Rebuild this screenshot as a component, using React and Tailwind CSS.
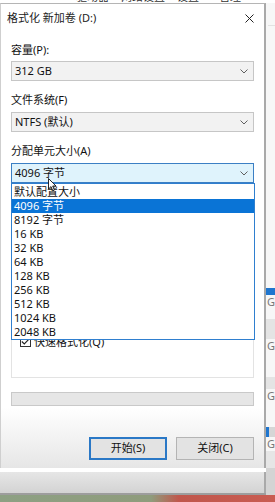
import React from 'react';

const sizes = ['默认配置大小', '4096 字节', '8192 字节', '16 KB', '32 KB', '64 KB', '128 KB', '256 KB', '512 KB', '1024 KB', '2048 KB'];

function Chevron() {
  return (
    <svg width="8" height="5" viewBox="0 0 8 5" className="shrink-0">
      <path d="M0.5 0.5 L4 4 L7.5 0.5" fill="none" stroke="#606060" strokeWidth="1" />
    </svg>
  );
}

function Select({ value, focused, children }) {
  return (
    <div
      className={
        'relative h-[20px] flex items-center justify-between pl-[3px] pr-[5px] border ' +
        (focused ? 'bg-[#dff3fc] border-[#3b7fc4]' : 'bg-[#f2f2f2] border-[#c6c6c6]')
      }
    >
      <span>{value}</span>
      <Chevron />
      {children}
    </div>
  );
}

function GlStrip() {
  return (
    <div className="w-[9px] flex flex-col bg-[#f7f7f7] text-[#777] overflow-hidden">
      <div className="h-[22px]" />
      <div className="h-[1px] bg-[#e2e2e2] ml-[2px]" />
      <div className="h-[262px]" />
      <div className="h-[7px] bg-[#1f76cf]" />
      <div className="h-[14px] leading-[14px] pl-[1px] text-[11px]">GI</div>
      <div className="h-[10px]" />
      <div className="h-[20px] bg-[#e4e4e4]" />
      <div className="h-[14px] leading-[14px] pl-[1px] text-[11px]">GI</div>
      <div className="h-[24px]" />
      <div className="h-[12px] bg-[#e4e4e4]" />
      <div className="h-[14px] leading-[14px] pl-[1px] text-[11px]">GI</div>
      <div className="h-[24px]" />
      <div className="h-[10px] flex">
        <div className="w-[3px] bg-[#1f76cf]" />
        <div className="flex-1 bg-[#d6d6d6]" />
      </div>
      <div className="h-[14px] leading-[14px] pl-[1px] text-[11px]">GI</div>
      <div className="flex-1 bg-[#e6e6e6]" />
    </div>
  );
}

export default function App() {
  return (
    <div
      className="w-[275px] h-[502px] overflow-hidden flex flex-col bg-white text-[11px] text-[#111]"
      style={{ fontFamily: '"Segoe UI", "Noto Sans", "Noto Sans CJK SC", sans-serif' }}
    >
      {/* window behind, only its bottom edge shows */}
      <div className="h-[3px] overflow-hidden bg-white">
        <div className="-mt-[9px] pl-[76px] leading-[12px] text-[#333] whitespace-nowrap flex gap-[12px]">
          <span>驱动器</span>
          <span>网络设置</span>
          <span>设置</span>
          <span className="pl-[8px]">管理</span>
        </div>
      </div>

      <div className="flex h-[465px]">
        <div className="relative w-[266px] flex flex-col border-t border-l border-r-2 border-t-[#b5b5b5] border-l-[#cfcfcf] border-r-[#a9a9a9] bg-[linear-gradient(to_bottom,#ffffff_87%,#e6e6e6)]">
          {/* title bar */}
          <div className="h-[29px] flex items-center justify-between pl-[6px] pr-[10px]">
            <span className="text-[11px] text-[#222]">格式化 新加卷 (D:)</span>
            <svg width="9" height="9" viewBox="0 0 9 9">
              <path d="M0.5 0.5 L8.5 8.5 M8.5 0.5 L0.5 8.5" stroke="#222" strokeWidth="1" />
            </svg>
          </div>

          <div className="px-[10px] flex flex-col">
            <div className="mt-[9px] leading-[16px]">容量(P):</div>
            <div className="mt-[3px]">
              <Select value="312 GB" />
            </div>

            <div className="mt-[11px] leading-[16px]">文件系统(F)</div>
            <div className="mt-[4px]">
              <Select value="NTFS (默认)" />
            </div>

            <div className="mt-[11px] leading-[16px]">分配单元大小(A)</div>
            <div className="mt-[4px] relative z-10">
              <Select value="4096 字节" focused>
                <div className="absolute left-[-1px] top-[19px] w-[244px] border border-[#2f7fcf] bg-white pt-[1px]">
                  {sizes.map((s, i) => (
                    <div
                      key={s}
                      className={
                        'h-[14px] leading-[14px] pl-[2px] whitespace-nowrap ' +
                        (i === 1 ? 'bg-[#0a74d6] text-white' : '')
                      }
                    >
                      {s}
                    </div>
                  ))}
                </div>
                {/* mouse pointer */}
                <svg className="absolute left-[36px] top-[14px] z-20" width="9" height="14" viewBox="0 0 9 14">
                  <path d="M0.5 0.5 L0.5 11 L3 8.6 L4.8 12.8 L6.4 12.1 L4.7 8 L8 8 Z" fill="#fff" stroke="#111" strokeWidth="0.9" />
                </svg>
              </Select>
            </div>

            {/* controls hidden under the open list */}
            <div className="h-[138px]" />

            <div className="h-[57px] border border-[#e3e3e3] pt-[12px] pl-[8px]">
              <div className="h-[15px] flex items-center gap-[3px]">
                <div className="w-[11px] h-[11px] border border-[#333] flex items-center justify-center">
                  <svg width="9" height="7" viewBox="0 0 9 7">
                    <path d="M0.8 3.5 L3.3 6 L8.2 0.8" fill="none" stroke="#222" strokeWidth="1.1" />
                  </svg>
                </div>
                <span className="leading-[15px]">快速格式化(Q)</span>
              </div>
            </div>

            <div className="mt-[14px] h-[14px] bg-[#e6e6e6] border border-[#c9c9c9]" />

            <div className="mt-[31px] flex justify-end gap-[9px]">
              <button className="w-[78px] h-[23px] border-2 border-[#2a78c6] bg-[#e3e3e3] text-[#111] text-[11px]">
                开始(S)
              </button>
              <button className="w-[78px] h-[23px] border border-[#b4b4b4] bg-[#e3e3e3] text-[#111] text-[11px]">
                关闭(C)
              </button>
            </div>
          </div>
        </div>
        <GlStrip />
      </div>

      {/* lower window edge */}
      <div className="flex h-[27px]">
        <div className="w-[266px] flex flex-col">
          <div className="h-[4px] bg-white" />
          <div className="h-[21px] bg-[linear-gradient(to_bottom,#e6e6e6,#d3d3d3)] border-r-2 border-[#a9a9a9]" />
          <div className="h-[2px] bg-[#9d9d9d]" />
        </div>
        <div className="flex-1 bg-[#d4d4d4]" />
      </div>
      <div className="h-[7px] bg-[linear-gradient(to_right,#8da083_0%,#8f9c7c_55%,#c0574c_65%,#c95c52_100%)]" />
    </div>
  );
}
